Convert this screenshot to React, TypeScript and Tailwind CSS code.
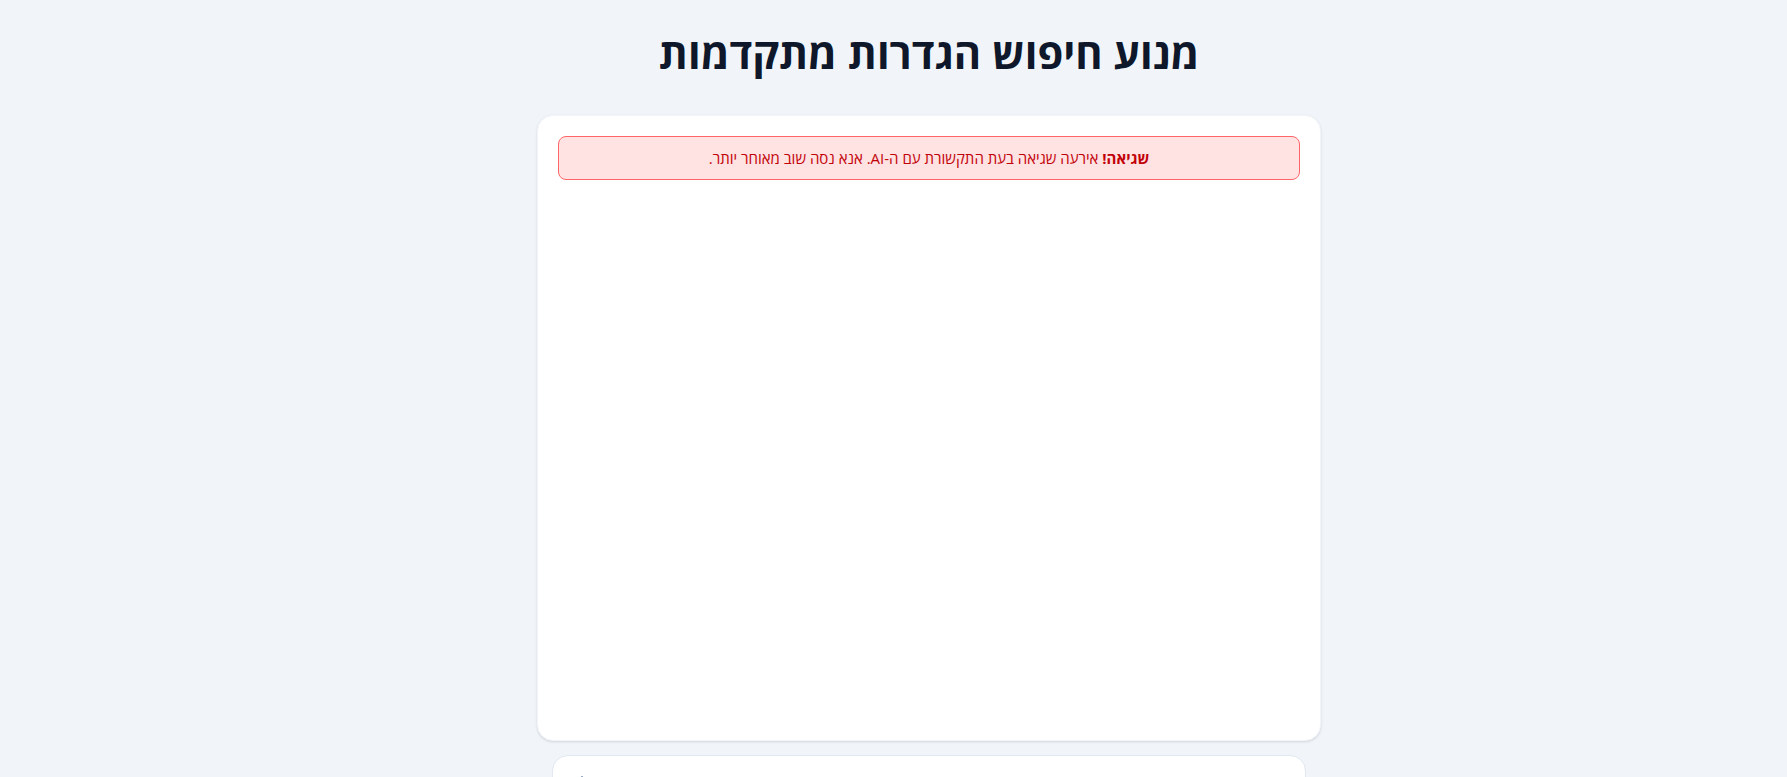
import { ArrowUp } from 'lucide-react'

export default function App() {
  return (
    <div
      dir="rtl"
      className="min-h-screen bg-slate-100 pl-[71px]"
      style={{ fontFamily: '"Open Sans", "Noto Sans", sans-serif' }}
    >
      <div className="mx-auto w-[784px] pt-[29px] pb-10">
        <h1 className="mb-[38px] text-center text-[41.7px] leading-[48px] font-bold text-slate-900">
          מנוע חיפוש הגדרות מתקדמות
        </h1>

        <div className="h-[626px] rounded-2xl border border-slate-100 bg-white p-5 shadow-sm">
          <div className="rounded-lg border border-red-400 bg-red-100 px-4 py-[10px] text-center text-[15px] leading-[22px] text-red-700">
            <strong className="font-bold">שגיאה!</strong> אירעה שגיאה בעת התקשורת עם ה-AI. אנא נסה שוב מאוחר יותר.
          </div>
        </div>

        <div className="mx-[15px] mt-[14px] rounded-2xl border border-slate-200 bg-white px-5 py-4">
          <div className="flex items-start gap-3">
            <textarea
              rows={2}
              placeholder="שאל כל שאלה על הגדרות המערכת, לדוגמה: איך לשנות את הלוגו?"
              className="flex-1 resize-none bg-transparent text-center text-base leading-6 text-slate-700 placeholder:text-slate-700 focus:outline-none"
            />
            <button className="mt-[1px] text-slate-400">
              <ArrowUp size={18} />
            </button>
          </div>
        </div>
      </div>
    </div>
  )
}
